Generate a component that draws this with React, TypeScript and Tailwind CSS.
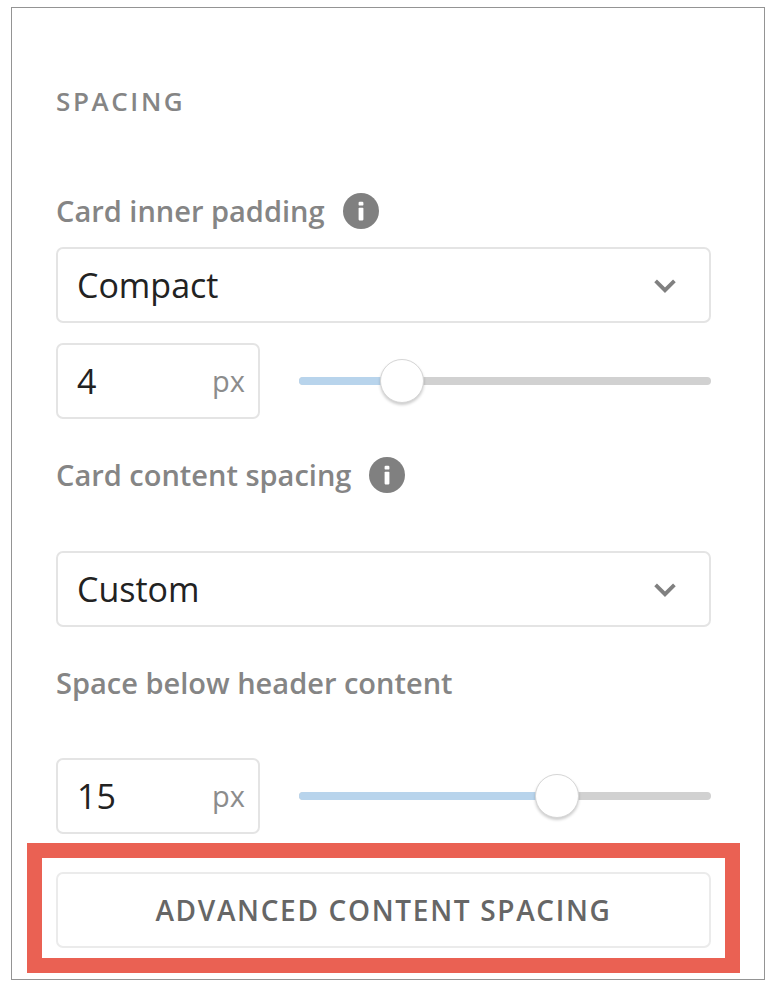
import React, { useState } from 'react';

interface LabelProps {
  text: string;
  htmlFor: string;
  info?: boolean;
}

const InfoIcon = () => (
  <svg viewBox="0 0 36 36" className="h-9 w-9" aria-hidden="true">
    <circle cx="18" cy="18" r="18" fill="#808080" />
    <rect x="15.6" y="8.8" width="4.8" height="3.8" rx="1.2" fill="#fff" />
    <rect x="15.6" y="14.8" width="4.8" height="12.6" rx="0.8" fill="#fff" />
  </svg>
);

const ChevronIcon = () => (
  <svg
    viewBox="0 0 22 14"
    className="pointer-events-none absolute top-8 right-[35px] h-[14px] w-[22px]"
    fill="none"
    aria-hidden="true"
  >
    <path d="M1.6 1.8L11 11.2L20.4 1.8" stroke="#808080" strokeWidth="3.8" />
  </svg>
);

function FieldLabel({ text, htmlFor, info }: LabelProps) {
  return (
    <div className="flex h-9 items-center gap-[18px]">
      <label htmlFor={htmlFor} className="text-[29px] leading-9 font-semibold text-[#858585]">
        {text}
      </label>
      {info && (
        <button type="button" aria-label={`About ${text}`}>
          <InfoIcon />
        </button>
      )}
    </div>
  );
}

interface SelectFieldProps {
  id: string;
  initial: string;
}

function SelectField({ id, initial }: SelectFieldProps) {
  const [value, setValue] = useState(initial);

  return (
    <div className="relative">
      <select
        id={id}
        value={value}
        onChange={(e) => setValue(e.target.value)}
        className="block h-[76px] w-full appearance-none rounded-[7px] border-2 border-[#e4e4e4] bg-white px-[19px] text-[34px] text-[#222222]"
      >
        <option>Compact</option>
        <option>Comfortable</option>
        <option>Custom</option>
      </select>
      <ChevronIcon />
    </div>
  );
}

interface PixelFieldProps {
  id: string;
  label: string;
  initial: number;
  max: number;
}

function PixelField({ id, label, initial, max }: PixelFieldProps) {
  const [value, setValue] = useState(initial);

  return (
    <div className="flex items-center gap-[39px]">
      <div className="flex h-[76px] w-[204px] shrink-0 items-center rounded-[7px] border-2 border-[#e4e4e4] pr-[13px] pl-[19px]">
        <input
          id={id}
          type="text"
          inputMode="numeric"
          aria-label={label}
          value={value}
          onChange={(e) => setValue(Number(e.target.value) || 0)}
          className="w-full min-w-0 text-[34px] leading-[48px] text-[#222222] outline-none"
        />
        <span className="text-[29px] leading-9 text-[#8c8c8c]">px</span>
      </div>

      <div className="relative h-11 min-w-0 flex-1">
        {/* Track sits under the range input, whose thumb overhangs both ends */}
        <div className="absolute inset-x-0 top-[18px] h-2 overflow-hidden rounded-full bg-[#d1d1d1]">
          <div className="h-full bg-[#b8d4ec]" style={{ width: `${(value / max) * 100}%` }} />
        </div>
        <input
          type="range"
          aria-label={`${label} slider`}
          min={0}
          max={max}
          value={value}
          onChange={(e) => setValue(Number(e.target.value))}
          className="relative -mx-[22px] block h-11 w-[calc(100%+44px)] appearance-none bg-transparent [&::-webkit-slider-thumb]:h-11 [&::-webkit-slider-thumb]:w-11 [&::-webkit-slider-thumb]:appearance-none [&::-webkit-slider-thumb]:rounded-full [&::-webkit-slider-thumb]:border [&::-webkit-slider-thumb]:border-[#d6d6d6] [&::-webkit-slider-thumb]:bg-white [&::-webkit-slider-thumb]:shadow-[0_2px_3px_rgba(0,0,0,0.2)]"
        />
      </div>
    </div>
  );
}

export default function App() {
  return (
    <div className="min-h-screen bg-white pt-[7px] pr-[9px] pb-[6px] pl-[11px] font-['Open_Sans','Noto_Sans',sans-serif]">
      <section className="border border-[#949494] pt-[75px] pr-[53px] pb-[6px] pl-11">
        <h2 className="text-[26px] leading-9 font-semibold tracking-widest text-[#858585]">SPACING</h2>

        <div className="mt-[74px]">
          <FieldLabel text="Card inner padding" htmlFor="inner-padding" info />
          <div className="mt-[18px] space-y-5">
            <SelectField id="inner-padding" initial="Compact" />
            <PixelField id="inner-padding-px" label="Card inner padding in pixels" initial={4} max={16} />
          </div>
        </div>

        <div className="mt-[38px]">
          <FieldLabel text="Card content spacing" htmlFor="content-spacing" info />
          <div className="mt-[58px]">
            <SelectField id="content-spacing" initial="Custom" />
          </div>
        </div>

        <div className="mt-[38px]">
          <FieldLabel text="Space below header content" htmlFor="header-space" />
          <div className="mt-[57px]">
            <PixelField id="header-space" label="Space below header content" initial={15} max={24} />
          </div>
        </div>

        {/* Highlighted action */}
        <div className="-mx-[29px] mt-[9px] border-[15px] border-[#ea6153] px-[14px] pt-[14px] pb-[10px]">
          <button
            type="button"
            className="h-[76px] w-full rounded-[7px] border-2 border-[#ebebeb] text-[28px] font-semibold tracking-[0.06em] text-[#666666]"
          >
            ADVANCED CONTENT SPACING
          </button>
        </div>
      </section>
    </div>
  );
}
